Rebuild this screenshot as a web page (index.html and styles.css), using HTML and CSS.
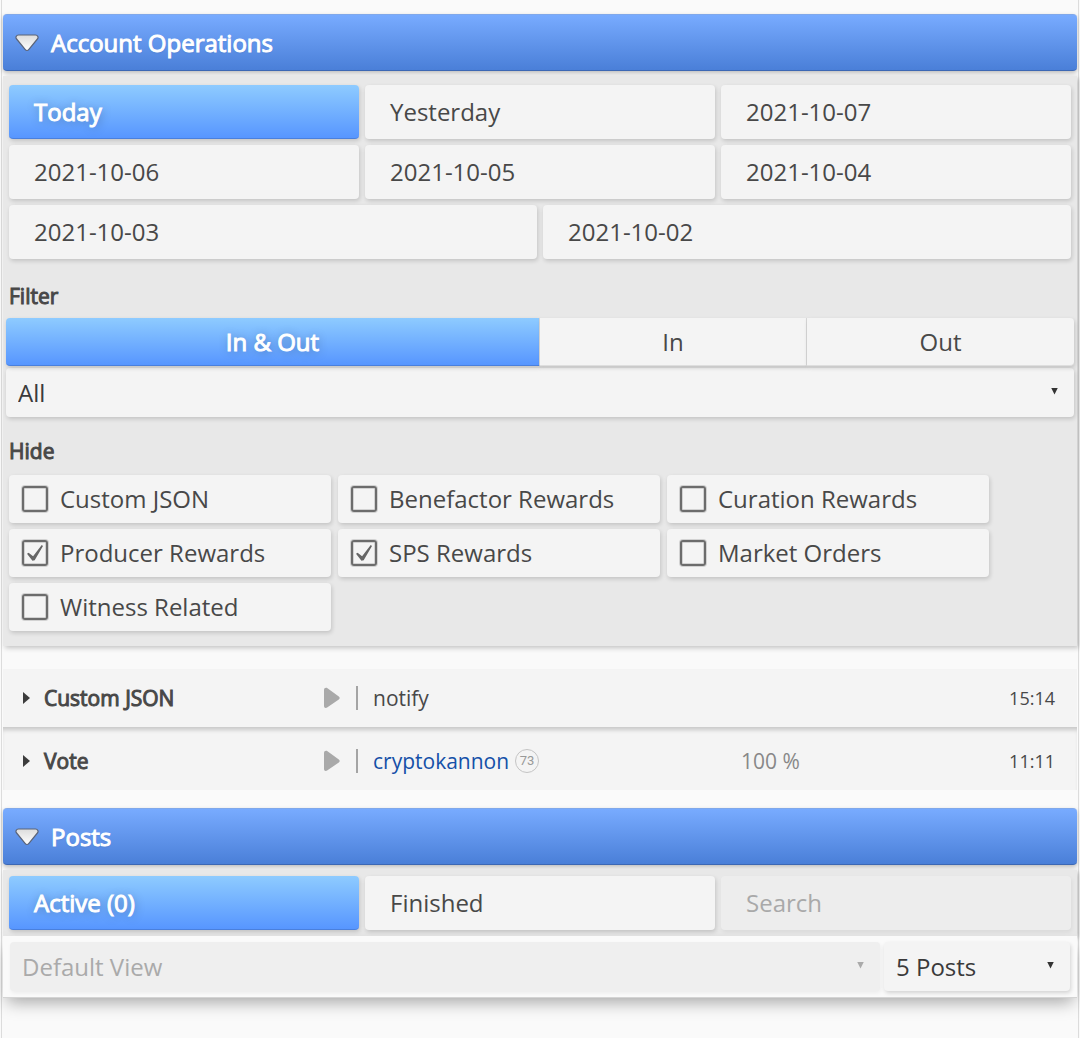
FILE: index.html
```html
<!DOCTYPE html>
<html lang="en">
<head>
<meta charset="utf-8">
<meta name="viewport" content="width=device-width, initial-scale=1">
<title>Account Operations</title>
<link rel="stylesheet" href="styles.css">
</head>
<body>
<svg class="defs" width="0" height="0" aria-hidden="true">
  <defs>
    <linearGradient id="silver" x1="0" y1="0" x2="0" y2="1">
      <stop offset="0" stop-color="#dcdcdc"/>
      <stop offset="1" stop-color="#ffffff"/>
    </linearGradient>
    <symbol id="fold" viewBox="0 0 24 18">
      <path d="M3.500 1h17c2.300 0 3.300 2.400 1.900 4l-8.700 10.600c-1 1.200-2.400 1.200-3.400 0L1.600 5C.2 3.400 1.200 1 3.500 1z" fill="url(#silver)" stroke="#5b6478" stroke-width="1.200"/>
    </symbol>
    <symbol id="play" viewBox="0 0 16 22">
      <path d="M0 3C0 1 1.800.3 3.500 1.200L14.800 9.500c1.200.9 1.200 2.100 0 3L3.500 20.300C1.800 21.500 0 21 0 19z" fill="#a9a9a9"/>
    </symbol>
  </defs>
</svg>
<main class="page">
  <section>
    <h2 class="bar"><button type="button" class="bar-toggle" aria-expanded="true"><svg class="fold"><use href="#fold"/></svg>Account Operations</button></h2>
    <div class="panel panel-operations">
      <div class="tabs">
        <button type="button" class="tab selected">Today</button>
        <button type="button" class="tab">Yesterday</button>
        <button type="button" class="tab">2021-10-07</button>
        <button type="button" class="tab">2021-10-06</button>
        <button type="button" class="tab">2021-10-05</button>
        <button type="button" class="tab">2021-10-04</button>
        <button type="button" class="tab">2021-10-03</button>
        <button type="button" class="tab">2021-10-02</button>
      </div>
      <h3 class="caption"><label for="kind">Filter</label></h3>
      <div class="segments">
        <button type="button" class="segment selected">In &amp; Out</button>
        <button type="button" class="segment">In</button>
        <button type="button" class="segment">Out</button>
      </div>
      <div class="select select-kind">
        <select id="kind"><option>All</option></select>
      </div>
      <h3 class="caption">Hide</h3>
      <div class="checks">
        <label class="check"><input type="checkbox">Custom JSON</label>
        <label class="check"><input type="checkbox">Benefactor Rewards</label>
        <label class="check"><input type="checkbox">Curation Rewards</label>
        <label class="check"><input type="checkbox" checked>Producer Rewards</label>
        <label class="check"><input type="checkbox" checked>SPS Rewards</label>
        <label class="check"><input type="checkbox">Market Orders</label>
        <label class="check"><input type="checkbox">Witness Related</label>
      </div>
    </div>
    <ul class="operations">
      <li class="operation">
        <span class="caret"></span>
        <strong class="name">Custom JSON</strong>
        <span class="direction"><svg class="play"><use href="#play"/></svg></span>
        <span class="subject">notify</span>
        <span class="amount"></span>
        <time class="time">15:14</time>
      </li>
      <li class="operation">
        <span class="caret"></span>
        <strong class="name">Vote</strong>
        <span class="direction"><svg class="play"><use href="#play"/></svg></span>
        <span class="subject"><a href="#cryptokannon">cryptokannon</a><span class="reputation">73</span></span>
        <span class="amount">100 %</span>
        <time class="time">11:11</time>
      </li>
    </ul>
  </section>
  <section>
    <h2 class="bar"><button type="button" class="bar-toggle" aria-expanded="true"><svg class="fold"><use href="#fold"/></svg>Posts</button></h2>
    <div class="panel panel-posts">
      <div class="tabs">
        <button type="button" class="tab selected">Active (0)</button>
        <button type="button" class="tab">Finished</button>
        <button type="button" class="tab" disabled>Search</button>
      </div>
    </div>
    <div class="toolbar">
      <div class="select select-view disabled">
        <select aria-label="View" disabled><option>Default View</option></select>
      </div>
      <div class="select select-count">
        <select aria-label="Posts per page"><option>5 Posts</option></select>
      </div>
    </div>
  </section>
</main>
</body>
</html>
```
FILE: styles.css
```css
* { box-sizing: border-box; }

body {
  margin: 0;
  background: #fafafa;
  color: #484848;
  font: 24px/32px "Open Sans", "Noto Sans", sans-serif;
  overflow-x: hidden;
}

button, select, input { font: inherit; color: inherit; }

.defs { display: block; }

.page {
  min-height: 100vh;
  margin: 0 1px;
  padding: 14px 1px 20px;
  border: solid #dcdcdc;
  border-width: 0 1px;
}

/* Section headings */
.bar { margin: 0; font-size: 24px; font-weight: 400; }

.bar-toggle {
  display: flex;
  align-items: center;
  gap: 12px;
  width: 100%;
  height: 57px;
  padding: 0 12px;
  border: 0;
  border-top: 1px solid #80a8ea;
  border-bottom: 1px solid #3d68b4;
  border-radius: 4px;
  background: linear-gradient(#78abff, #4a7fd8);
  box-shadow: 0 2px 4px rgba(0, 0, 0, .25);
  color: #fff;
  -webkit-text-stroke: 1px;
  text-shadow: 0 1px 2px rgba(0, 0, 0, .1);
}

.fold { width: 24px; height: 18px; }

/* Panels */
.panel {
  margin-top: 5px;
  background: #e8e8e8;
  box-shadow: 2px 2px 5px rgba(0, 0, 0, .22);
}

.panel-operations { padding: 9px 3px 15px; }
.panel-posts { padding: 6px 3px; }

.tabs {
  display: flex;
  flex-wrap: wrap;
  gap: 6px;
  padding: 0 3px;
}

.tab, .segment, .check, .select {
  border: 0;
  border-radius: 4px;
  background: #f4f4f4;
  box-shadow: 1px 2px 4px rgba(0, 0, 0, .16);
}

.tab {
  flex: 1 1 300px;
  height: 54px;
  padding: 0 25px;
  text-align: left;
}

.tab:disabled {
  background: #ededed;
  box-shadow: 1px 2px 4px rgba(0, 0, 0, .06);
  color: #a9a9a9;
}

.tab.selected, .segment.selected {
  border-bottom: 1px solid #4a80dd;
  background: linear-gradient(#8ecbff, #5796ff);
  color: #fff;
  -webkit-text-stroke: 1px;
  text-shadow: 1px 1px 10px rgba(0, 0, 0, .35);
}

.caption {
  margin: 0;
  padding: 0 3px;
  font-size: 21px;
  font-weight: 400;
  line-height: 28px;
  -webkit-text-stroke: 1px;
}

.tabs + .caption { padding-top: 23px; margin-bottom: 8px; }
.select + .caption { padding-top: 20px; margin-bottom: 10px; }

.segments { display: grid; grid-template-columns: 2fr 1fr 1fr; }

.segment {
  height: 48px;
  padding: 0;
  border-right: 1px solid #d8d8d8;
  border-bottom: 1px solid #dedede;
  border-radius: 0;
}

.segment:first-child { border-radius: 4px 0 0 4px; }
.segment:last-child { border-right: 0; border-radius: 0 4px 4px 0; }

/* Drop-downs */
.select { display: grid; align-items: center; }
.select-kind { margin-top: 2px; }

.select select {
  grid-area: 1 / 1;
  width: 100%;
  height: 49px;
  padding: 0 36px 0 12px;
  border: 0;
  background: transparent;
  color: #3a3a3a;
  appearance: none;
}

.select::after {
  grid-area: 1 / 1;
  justify-self: end;
  width: 7px;
  height: 7px;
  margin: 0 16px 3px 0;
  background: #333;
  clip-path: polygon(0 0, 100% 0, 50% 100%);
  content: "";
  pointer-events: none;
}

.select.disabled { background: #efefef; box-shadow: 1px 2px 4px rgba(0, 0, 0, .06); }
.select.disabled select { color: #aaa; opacity: 1; }
.select.disabled::after { background: #aaa; }

/* Hide options */
.checks {
  display: grid;
  grid-template-columns: repeat(auto-fill, 322px);
  gap: 6px 7px;
  padding: 0 3px;
}

.check {
  display: flex;
  align-items: center;
  gap: 12px;
  height: 48px;
  padding: 0 13px;
}

.check input {
  width: 26px;
  height: 26px;
  margin: 0;
  border: 2px solid #6c6c6c;
  border-radius: 3px;
  box-shadow: 0 0 0 1px rgba(108, 108, 108, .25), inset 0 0 0 1px rgba(108, 108, 108, .25);
  appearance: none;
}

.check input:checked::before {
  display: block;
  width: 16px;
  height: 16px;
  margin: 3px;
  background: #666;
  clip-path: polygon(0 54%, 10% 49%, 38% 70%, 92% 0, 100% 6%, 48% 96%, 34% 98%);
  content: "";
}

/* Operation list */
.operations {
  margin: 0 0 18px;
  padding: 23px 0 0;
  font-size: 21px;
  list-style: none;
}

.operation {
  display: grid;
  grid-template-columns: 21px 280px 49px 1fr 268px auto;
  align-items: center;
  height: 58px;
  padding: 0 22px 0 20px;
  background: #f4f4f4;
}

.operation + .operation {
  height: 63px;
  padding-top: 5px;
  box-shadow: inset 0 5px 4px -2px rgba(0, 0, 0, .18);
}

.caret {
  width: 7px;
  height: 12px;
  background: #3c3c3c;
  clip-path: polygon(0 0, 100% 50%, 0 100%);
}

.name { font-weight: 400; -webkit-text-stroke: 1px; }

.direction {
  display: flex;
  align-items: center;
  width: 34px;
  height: 24px;
  border-right: 2px solid #a4a4a4;
}

.play { width: 16px; height: 22px; }

.subject { display: flex; align-items: center; gap: 6px; }
.subject a { color: #1450a8; text-decoration: none; }

.reputation {
  width: 24px;
  height: 24px;
  border: 1px solid #c4c4c4;
  border-radius: 50%;
  color: #999;
  font: 13px/22px Roboto, sans-serif;
  text-align: center;
}

.amount { color: #888; }
.time { font-size: 18px; }

/* Posts toolbar */
.toolbar {
  display: grid;
  grid-template-columns: 1fr 186px;
  gap: 4px;
  padding: 6px 7px;
  border-bottom: 1px solid #d4d4d4;
  background: #fafafa;
  box-shadow: 0 8px 16px -4px rgba(0, 0, 0, .35);
}
```
